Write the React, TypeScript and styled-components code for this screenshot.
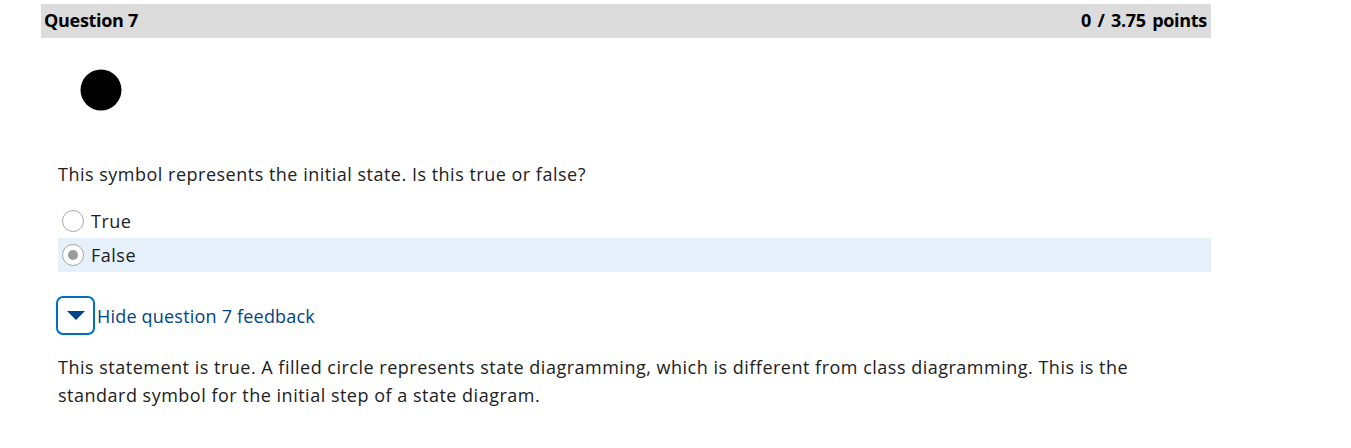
import React from "react";
import styled, { createGlobalStyle } from "styled-components";

const Global = createGlobalStyle`
  html, body { margin: 0; padding: 0; background: #fff; }
  body { font-family: "Open Sans", "Noto Sans", sans-serif; color: #202122; }
`;

const Page = styled.div`
  padding: 4px 0 0 41px;
  width: 1170px;
`;

const Header = styled.div`
  display: flex;
  justify-content: space-between;
  align-items: center;
  height: 34px;
  background: #dcdcdc;
  padding: 0 4px 2px 3px;
  box-sizing: border-box;
  font-size: 18px;
  font-weight: 700;
  letter-spacing: -0.3px;
  color: #000;
`;

const Points = styled.span`
  word-spacing: 2px;
`;

const Body = styled.div`
  padding: 0 0 0 17px;
`;

const FigureArea = styled.div`
  height: 104px;
  display: flex;
  align-items: center;
  padding-left: 22px;
  box-sizing: border-box;
`;

const Question = styled.p`
  margin: 20px 0 18px;
  font-size: 18px;
  line-height: 24px;
  letter-spacing: 0.5px;
`;

const Options = styled.div`
  display: flex;
  flex-direction: column;
`;

const Option = styled.div<{ $selected?: boolean }>`
  display: flex;
  align-items: center;
  gap: 7px;
  height: 34px;
  padding-left: 4px;
  background: ${(p) => (p.$selected ? "#e6f0fb" : "transparent")};
  font-size: 18px;
  letter-spacing: 0.5px;
`;

const Radio = styled.span<{ $checked?: boolean }>`
  width: 22px;
  height: 22px;
  box-sizing: border-box;
  border-radius: 50%;
  border: 1px solid #a8a8a8;
  background: #fff;
  display: inline-flex;
  align-items: center;
  justify-content: center;
  &::after {
    content: "";
    display: ${(p) => (p.$checked ? "block" : "none")};
    width: 10px;
    height: 10px;
    border-radius: 50%;
    background: #9a9a9a;
  }
`;

const FeedbackToggle = styled.div`
  display: flex;
  align-items: center;
  gap: 2px;
  margin-top: 24px;
  margin-left: -2px;
  color: #004489;
  font-size: 18px;
  letter-spacing: 0.2px;
`;

const ToggleButton = styled.button`
  width: 39px;
  height: 39px;
  box-sizing: border-box;
  border: 2px solid #006fbf;
  border-radius: 7px;
  background: #fff;
  padding: 0;
  display: inline-flex;
  align-items: center;
  justify-content: center;
`;

const Feedback = styled.p`
  margin: 18px 0 0;
  font-size: 18px;
  line-height: 28px;
  letter-spacing: 0.5px;
  max-width: 1090px;
`;

export default function App() {
  return (
    <>
      <Global />
      <Page>
        <Header>
          <span>Question 7</span>
          <Points>0 / 3.75 points</Points>
        </Header>
        <Body>
          <FigureArea>
            <svg width="42" height="42" viewBox="0 0 42 42">
              <circle cx="21" cy="21" r="20.5" fill="#000" />
            </svg>
          </FigureArea>
          <Question>This symbol represents the initial state. Is this true or false?</Question>
          <Options>
            <Option>
              <Radio />
              <span>True</span>
            </Option>
            <Option $selected>
              <Radio $checked />
              <span>False</span>
            </Option>
          </Options>
          <FeedbackToggle>
            <ToggleButton aria-label="Hide question 7 feedback">
              <svg width="18" height="9" viewBox="0 0 18 9">
                <path d="M0 0 H18 L9 9 Z" fill="#004489" />
              </svg>
            </ToggleButton>
            <span>Hide question 7 feedback</span>
          </FeedbackToggle>
          <Feedback>
            This statement is true. A filled circle represents state diagramming, which is different from class
            diagramming. This is the standard symbol for the initial step of a state diagram.
          </Feedback>
        </Body>
      </Page>
    </>
  );
}
